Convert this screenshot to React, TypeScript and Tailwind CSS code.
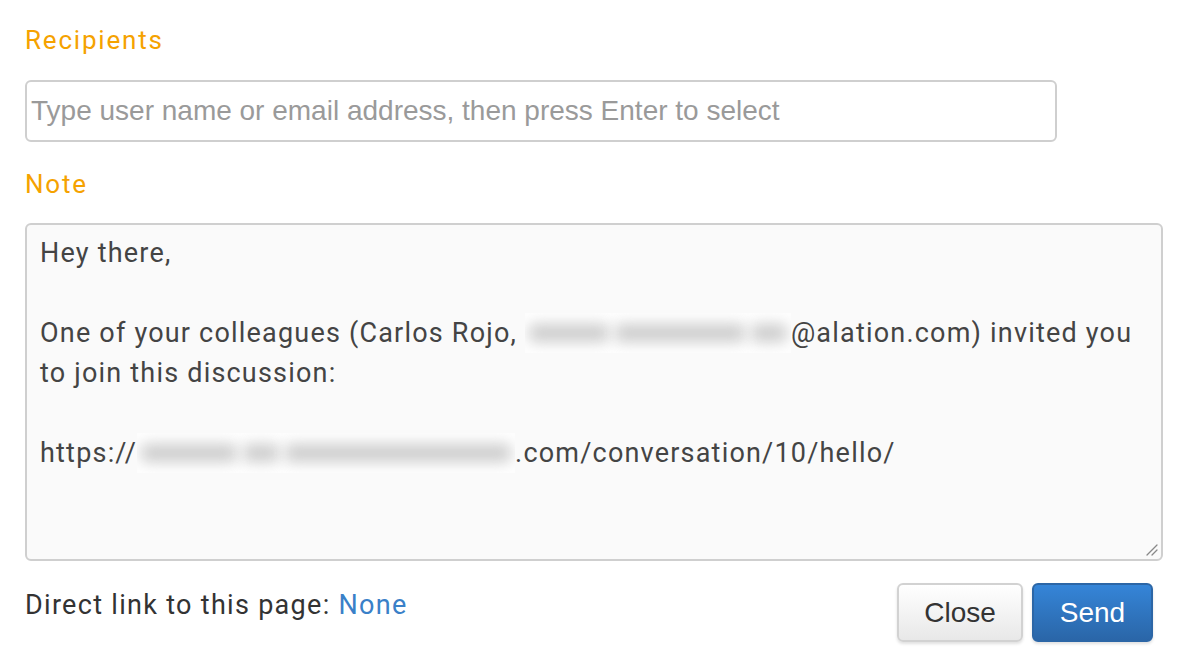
// blurred-out part of the message, drawn as soft grey smudges
const Blur = ({ w, words }: { w: string; words: number[] }) => (
  <span aria-hidden className={`inline-flex ${w} h-[40px] items-center gap-[6px] overflow-hidden bg-white/70 px-[4px] align-top`}>
    {words.map((ww, i) => (
      <span key={i} className="h-[18px] shrink-0 rounded-[6px] bg-[#cdcdcd] blur-[7px]" style={{ width: ww }} />
    ))}
  </span>
);

const ResizeGrip = () => (
  <svg className="absolute bottom-[3px] right-[3px]" width="14" height="14" viewBox="0 0 14 14">
    <path d="M13 3 L3 13 M13 8 L8 13" stroke="#888" strokeWidth="1.3" strokeLinecap="round" />
  </svg>
);

export default function App() {
  return (
    <div className="min-h-[669px] w-[1188px] bg-white px-[25px] pt-[24px] font-['Roboto',sans-serif]">
      <label className="block text-[26px] leading-[32px] tracking-[1.8px] text-[#f5a200]">Recipients</label>
      <div className="mt-[24px] flex h-[62px] w-[1032px] items-center rounded-[6px] border-2 border-[#cfcfcf] px-[4px]">
        <span className="font-['Liberation_Sans',Arial,sans-serif] text-[28px] text-[#9a9a9a]">
          Type user name or email address, then press Enter to select
        </span>
      </div>

      <label className="mt-[26px] block text-[26px] leading-[32px] tracking-[1.8px] text-[#f5a200]">Note</label>
      <div className="relative mt-[23px] h-[338px] w-[1138px] rounded-[6px] border-2 border-[#cfcfcf] bg-[#fafafa] px-[13px] pt-[8px] text-[27px] leading-[40px] tracking-[1.2px] text-[#444]">
        <p>Hey there,</p>
        <p className="h-[40px]" />
        <p className="whitespace-nowrap">
          One of your colleagues (Carlos Rojo,{" "}
          <Blur w="w-[266px]" words={[80, 130, 36]} />
          @alation.com) invited you
        </p>
        <p>to join this discussion:</p>
        <p className="h-[40px]" />
        <p className="whitespace-nowrap">
          https://
          <Blur w="w-[378px]" words={[96, 36, 226]} />
          .com/conversation/10/hello/
        </p>
        <ResizeGrip />
      </div>

      <div className="mt-[22px] flex items-start justify-between">
        <p className="mt-[4px] text-[27px] leading-[36px] tracking-[1.3px] text-[#333]">
          Direct link to this page: <a className="text-[#3a80c8]">None</a>
        </p>
        <div className="mr-[10px] flex gap-[9px] font-['Liberation_Sans',Arial,sans-serif] text-[28px]">
          <button className="h-[59px] w-[126px] rounded-[6px] border-2 border-[#d2d2d2] bg-gradient-to-b from-white to-[#e8e8e8] text-[#333] shadow-[0_2px_3px_rgba(0,0,0,0.12)]">
            Close
          </button>
          <button className="h-[59px] w-[121px] rounded-[6px] border-2 border-[#2c66a6] bg-gradient-to-b from-[#3585d8] to-[#2a66a8] text-white shadow-[0_2px_3px_rgba(0,0,0,0.12)]">
            Send
          </button>
        </div>
      </div>
    </div>
  );
}
